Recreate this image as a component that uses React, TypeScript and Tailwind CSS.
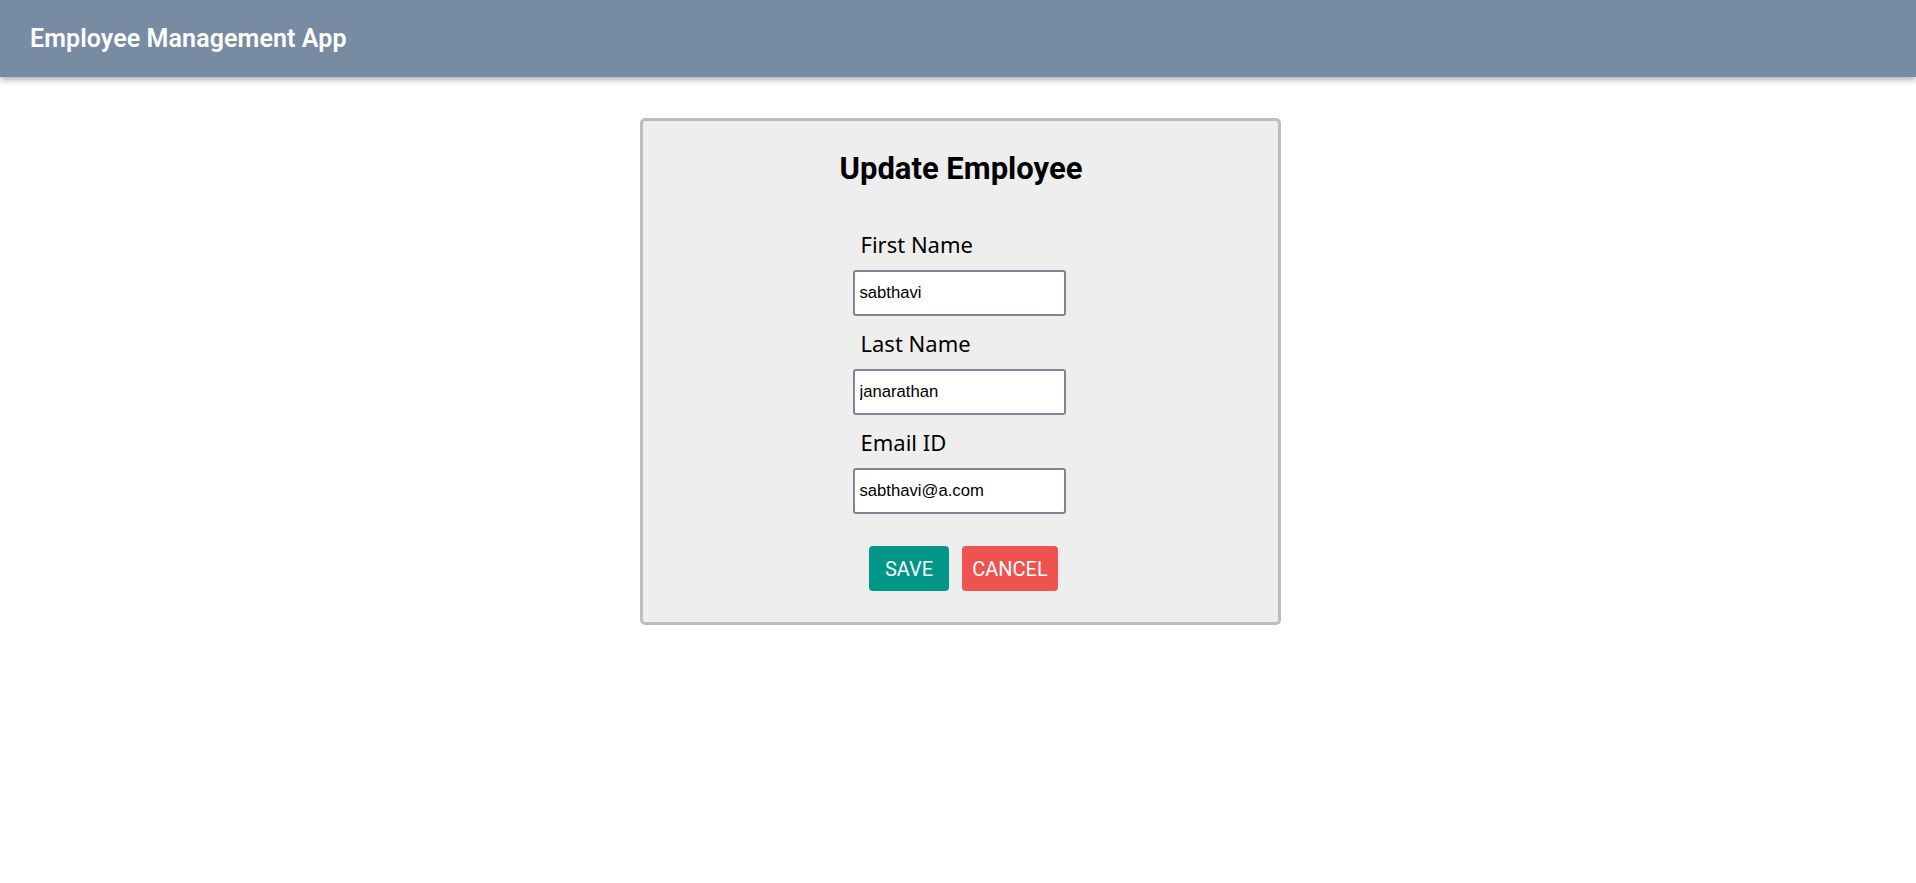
const FIELDS = [
  { label: "First Name", value: "sabthavi" },
  { label: "Last Name", value: "janarathan" },
  { label: "Email ID", value: "sabthavi@a.com" },
];

export default function App() {
  return (
    <div className="min-h-screen bg-white">
      <header className="flex h-[77px] items-center bg-[#778ca3] pl-[30px] shadow-[0_3px_6px_rgba(0,0,0,0.3)]">
        <h1 className="font-['Roboto',sans-serif] text-[25px] font-semibold tracking-[0.1px] text-white">
          Employee Management App
        </h1>
      </header>

      <main className="flex justify-center pl-[4px]">
        <div className="mt-[41px] w-[641px] rounded-[5px] border-[3px] border-[#bdbdbd] bg-[#eeeeee] pt-[30px] pr-[2px] pb-[31px]">
          <h2 className="pl-[4px] text-center font-['Roboto',sans-serif] text-[31px] font-bold leading-[35px] text-black">
            Update Employee
          </h2>

          <form className="mx-auto mt-[43px] flex w-[213px] flex-col">
            {FIELDS.map((field) => (
              <div key={field.label} className="mb-[12px] flex flex-col">
                <label className="mb-[11px] pl-[8px] font-['Noto_Sans',sans-serif] text-[22px] leading-[30px] text-black">
                  {field.label}
                </label>
                <input
                  type="text"
                  defaultValue={field.value}
                  className="h-[46px] w-[213px] rounded-[3px] border-2 border-[#7b8797] bg-white px-[5px] font-['Liberation_Sans',sans-serif] text-[16.67px] text-black outline-none"
                />
              </div>
            ))}

            <div className="mt-[20px] flex justify-center gap-[13px] pl-[9px]">
              <button
                type="button"
                className="h-[45px] w-[80px] rounded-[4px] bg-[#009688] font-['Roboto',sans-serif] text-[20px] text-white uppercase"
              >
                Save
              </button>
              <button
                type="button"
                className="h-[45px] w-[96px] rounded-[4px] bg-[#ef5350] font-['Roboto',sans-serif] text-[20px] text-white uppercase"
              >
                Cancel
              </button>
            </div>
          </form>
        </div>
      </main>
    </div>
  );
}
